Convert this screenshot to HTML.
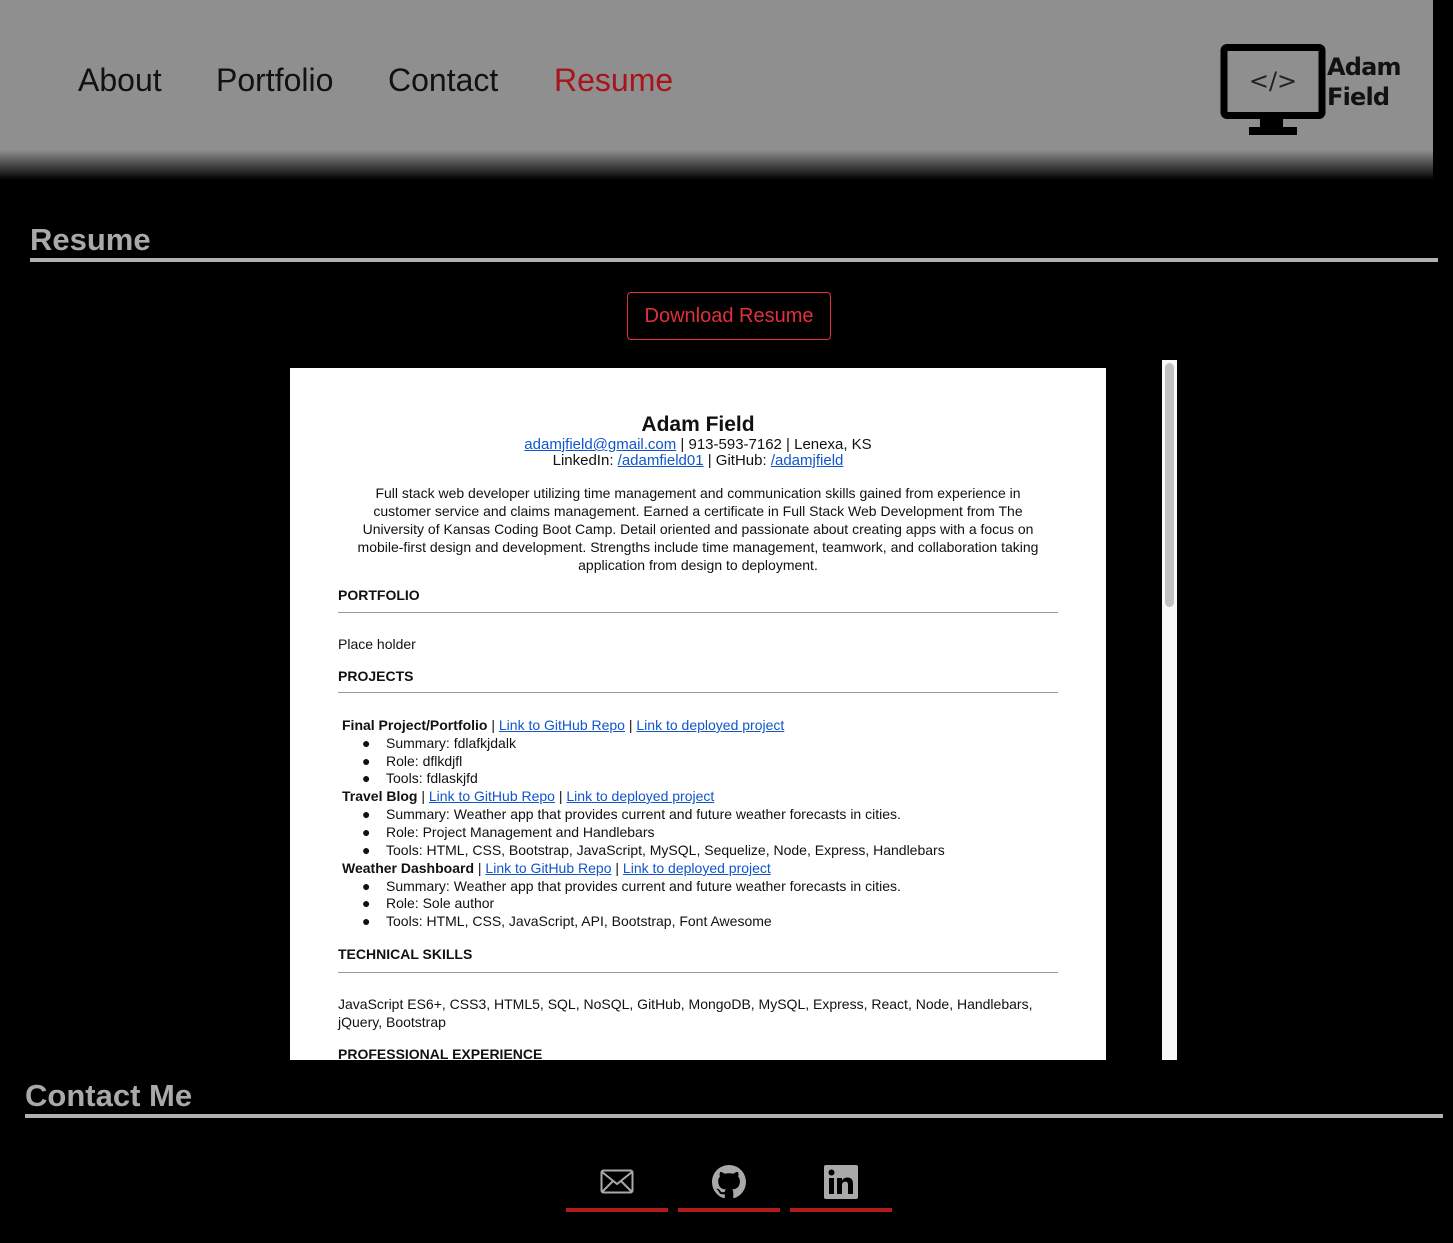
<!DOCTYPE html>
<html><head><meta charset="utf-8"><style>
*{margin:0;padding:0;box-sizing:border-box}
body{width:1453px;height:1243px;background:#000;position:relative;overflow:hidden;font-family:"Liberation Sans",sans-serif}
.hdr{position:absolute;left:0;top:0;width:1433px;height:180px;background:linear-gradient(#8f8f8f 0,#8f8f8f 150px,#000 180px)}
.nav{position:absolute;top:62px;font-size:32px;color:#111}
.h2{position:absolute;color:#a9a9a9;font-weight:bold;font-size:31px}
.rule{position:absolute;height:4px;background:#b0b0b0}
.btn{position:absolute;left:627px;top:292px;width:204px;height:48px;border:1px solid #e0303c;border-radius:4px;color:#e0303c;font-size:20px;text-align:center;line-height:46px}
.page{position:absolute;left:290px;top:368px;width:816px;height:692px;background:#fff;overflow:hidden;color:#111;font-size:14px}
.t{position:absolute;white-space:nowrap}
.c{left:0;width:816px;text-align:center}
a{color:#1155cc;text-decoration:underline}
.sec{position:absolute;left:48px;font-weight:bold;font-size:14px}
.hl{position:absolute;left:48px;width:720px;height:1px;background:#999}
.sb{position:absolute;left:1162px;top:360px;width:15px;height:700px;background:#f8f8f8}
.sb div{position:absolute;left:3px;top:3px;width:9px;height:244px;background:#c1c1c1;border-radius:5px}
.ic{position:absolute;top:1208px;width:102px;height:4px;background:#b01c1c}
</style></head><body>
<div class="hdr"></div>
<div class="nav" style="left:78px">About</div>
<div class="nav" style="left:216px">Portfolio</div>
<div class="nav" style="left:388px">Contact</div>
<div class="nav" style="left:554px;color:#a8141a">Resume</div>
<svg style="position:absolute;left:1218px;top:42px" width="110" height="94" viewBox="0 0 110 94">
<rect x="6" y="5.5" width="98" height="68" rx="3" fill="none" stroke="#000" stroke-width="7"/>
<rect x="42" y="75" width="23" height="11" fill="#000"/>
<rect x="31" y="85" width="48" height="8" fill="#000"/>
<text x="55" y="47" text-anchor="middle" font-family="DejaVu Sans" font-size="24" fill="#222">&lt;/&gt;</text>
</svg>
<div style="position:absolute;left:1327px;top:52px;font-family:'DejaVu Sans',sans-serif;font-weight:bold;font-size:24px;line-height:30px;color:#111;letter-spacing:-0.8px">Adam<br>Field</div>
<div class="h2" style="left:30px;top:222px">Resume</div>
<div class="rule" style="left:30px;top:258px;width:1408px"></div>
<div class="btn">Download Resume</div>
<div class="page">
<div class="t c" style="top:45px;font-size:21px;font-weight:bold">Adam Field</div>
<div class="t c" style="top:68px;font-size:15px"><a>adamjfield@gmail.com</a> | 913-593-7162 | Lenexa, KS</div>
<div class="t c" style="top:84px;font-size:15px">LinkedIn: <a>/adamfield01</a> | GitHub: <a>/adamjfield</a></div>
<div class="t c" style="top:116px;line-height:18px">Full stack web developer utilizing time management and communication skills gained from experience in<br>customer service and claims management. Earned a certificate in Full Stack Web Development from The<br>University of Kansas Coding Boot Camp. Detail oriented and passionate about creating apps with a focus on<br>mobile-first design and development. Strengths include time management, teamwork, and collaboration taking<br>application from design to deployment.</div>
<div class="sec" style="top:219px">PORTFOLIO</div><div class="hl" style="top:244px"></div>
<div class="t" style="left:48px;top:268px">Place holder</div>
<div class="sec" style="top:300px">PROJECTS</div><div class="hl" style="top:324px"></div>
<div class="t" style="left:52px;top:349px"><b>Final Project/Portfolio</b> | <a>Link to GitHub Repo</a> | <a>Link to deployed project</a></div>
<div class="t" style="left:72px;top:367px">●&nbsp;&nbsp;&nbsp;&nbsp;Summary: fdlafkjdalk</div>
<div class="t" style="left:72px;top:385px">●&nbsp;&nbsp;&nbsp;&nbsp;Role: dflkdjfl</div>
<div class="t" style="left:72px;top:402px">●&nbsp;&nbsp;&nbsp;&nbsp;Tools: fdlaskjfd</div>
<div class="t" style="left:52px;top:420px"><b>Travel Blog</b> | <a>Link to GitHub Repo</a> | <a>Link to deployed project</a></div>
<div class="t" style="left:72px;top:438px">●&nbsp;&nbsp;&nbsp;&nbsp;Summary: Weather app that provides current and future weather forecasts in cities.</div>
<div class="t" style="left:72px;top:456px">●&nbsp;&nbsp;&nbsp;&nbsp;Role: Project Management and Handlebars</div>
<div class="t" style="left:72px;top:474px">●&nbsp;&nbsp;&nbsp;&nbsp;Tools: HTML, CSS, Bootstrap, JavaScript, MySQL, Sequelize, Node, Express, Handlebars</div>
<div class="t" style="left:52px;top:492px"><b>Weather Dashboard</b> | <a>Link to GitHub Repo</a> | <a>Link to deployed project</a></div>
<div class="t" style="left:72px;top:510px">●&nbsp;&nbsp;&nbsp;&nbsp;Summary: Weather app that provides current and future weather forecasts in cities.</div>
<div class="t" style="left:72px;top:527px">●&nbsp;&nbsp;&nbsp;&nbsp;Role: Sole author</div>
<div class="t" style="left:72px;top:545px">●&nbsp;&nbsp;&nbsp;&nbsp;Tools: HTML, CSS, JavaScript, API, Bootstrap, Font Awesome</div>
<div class="sec" style="top:578px">TECHNICAL SKILLS</div><div class="hl" style="top:604px"></div>
<div class="t" style="left:48px;top:628px">JavaScript ES6+, CSS3, HTML5, SQL, NoSQL, GitHub, MongoDB, MySQL, Express, React, Node, Handlebars,</div>
<div class="t" style="left:48px;top:646px">jQuery, Bootstrap</div>
<div class="sec" style="top:678px">PROFESSIONAL EXPERIENCE</div>
</div>
<div class="sb"><div></div></div>
<div class="h2" style="left:25px;top:1078px">Contact Me</div>
<div class="rule" style="left:25px;top:1114px;width:1418px"></div>
<svg style="position:absolute;left:600px;top:1169px" width="34" height="26" viewBox="0 0 34 26"><rect x="1.5" y="1.5" width="31" height="22" rx="2" fill="none" stroke="#a9a9a9" stroke-width="2"/><path d="M2 3 L17 15 L32 3 M2 23 L13 12 M32 23 L21 12" fill="none" stroke="#a9a9a9" stroke-width="2"/></svg>
<svg style="position:absolute;left:712px;top:1165px" width="34" height="34" viewBox="0 0 16 16"><path fill="#a9a9a9" d="M8 0C3.58 0 0 3.58 0 8c0 3.54 2.290 6.530 5.470 7.590.4.07.55-.17.55-.38 0-.19-.01-.82-.01-1.490-2.010.37-2.530-.49-2.690-.94-.09-.23-.48-.94-.82-1.130-.28-.15-.68-.52-.01-.53.63-.01 1.080.58 1.230.82.72 1.210 1.870.87 2.330.66.07-.52.28-.87.51-1.070-1.780-.2-3.640-.89-3.640-3.950 0-.87.31-1.590.82-2.150-.08-.2-.36-1.020.08-2.120 0 0 .67-.21 2.200.82.64-.18 1.320-.27 2-.27.68 0 1.360.09 2 .27 1.530-1.040 2.200-.82 2.200-.82.44 1.100.16 1.920.08 2.120.51.56.82 1.270.82 2.150 0 3.070-1.870 3.750-3.650 3.950.29.25.54.73.54 1.480 0 1.070-.01 1.930-.01 2.200 0 .21.15.46.55.38A8.013 8.013 0 0016 8c0-4.420-3.580-8-8-8z"/></svg>
<svg style="position:absolute;left:824px;top:1165px" width="34" height="34" viewBox="0 0 34 34"><rect width="34" height="34" rx="2" fill="#a9a9a9"/><rect x="5" y="13" width="5" height="16" fill="#000"/><circle cx="7.5" cy="7.5" r="3" fill="#000"/><path d="M13 13h5v2.5c1-1.7 2.8-3 5.5-3 4 0 5.5 2.5 5.5 6.5V29h-5v-9c0-2-.6-3.4-2.6-3.4S18 18 18 20v9h-5z" fill="#000"/></svg>
<div class="ic" style="left:566px"></div>
<div class="ic" style="left:678px"></div>
<div class="ic" style="left:790px"></div>
</body></html>
